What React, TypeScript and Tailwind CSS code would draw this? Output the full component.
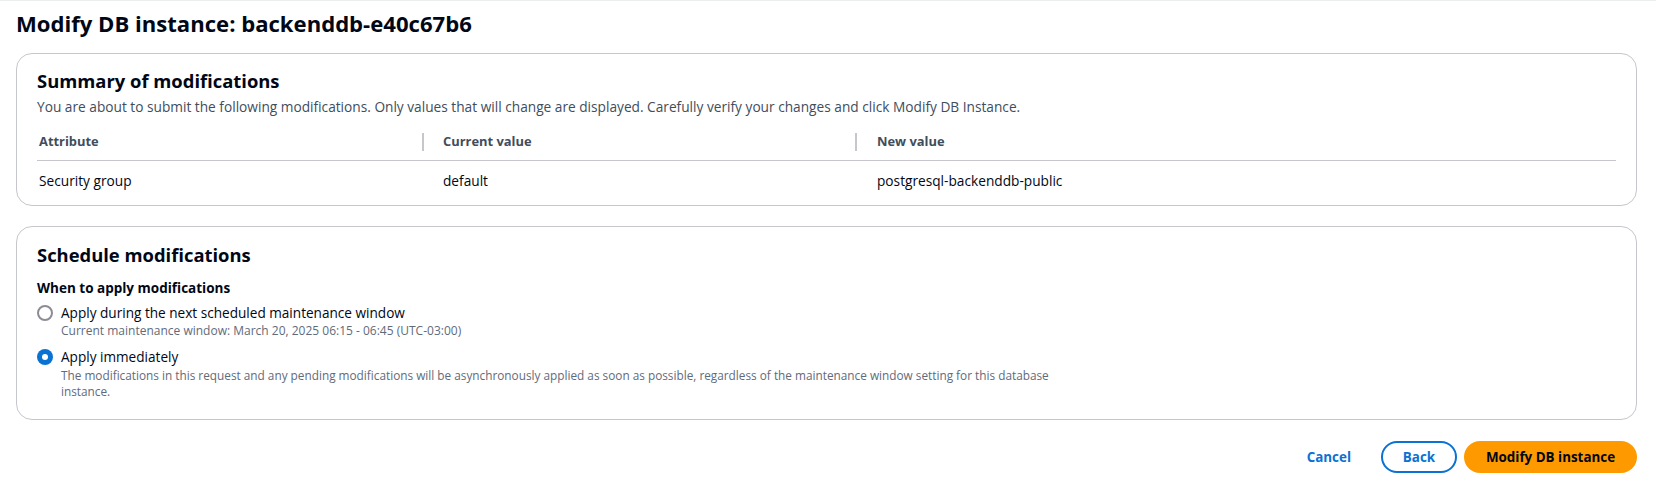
import React, { useState } from "react";

const font = { fontFamily: '"Open Sans", "Noto Sans", Arial, sans-serif' };

const rows = [
  {
    attribute: "Security group",
    current: "default",
    next: "postgresql-backenddb-public"
  }
];

const Radio = ({ checked }: { checked: boolean }) => {
  return checked ? (
    <span className="mt-[2px] w-[16px] h-[16px] rounded-full bg-[#0972d3] flex items-center justify-center shrink-0">
      <span className="w-[6px] h-[6px] rounded-full bg-white" />
    </span>
  ) : (
    <span className="mt-[2px] w-[16px] h-[16px] rounded-full border-2 border-[#8c8c94] bg-white shrink-0" />
  );
};

const App: React.FC = () => {
  const [when, setWhen] = useState("immediate");
  return (
    <div
      className="min-h-[485px] bg-white text-[#000716] pl-[16px] pr-[19px] pt-[7px] border-t border-[#eaeded]"
      style={font}
    >
      <h1 className="text-[22.1px] font-bold leading-[30px]">
        Modify DB instance: backenddb-e40c67b6
      </h1>
      <div className="mt-[15px] border border-[#c6c6cd] rounded-[16px] px-[20px] pt-[14px] pb-[4px]">
        <h2 className="text-[18.4px] font-bold leading-[26px]">Summary of modifications</h2>
        <p className="text-[13.7px] leading-[20px] text-[#414d5c] mt-[3px]">
          You are about to submit the following modifications. Only values that will change are displayed. Carefully verify your changes and click Modify DB Instance.
        </p>
        <div className="mt-[7px]">
          <div className="grid grid-cols-[385px_433px_1fr] border-b border-[#c6c6cd] text-[12.9px] font-bold text-[#414d5c]">
            <div className="px-[2px] h-[36px] flex items-center">Attribute</div>
            <div className="flex items-center h-[36px]">
              <span className="w-[2px] h-[18px] bg-[#c6c6cd]" />
              <span className="pl-[19px]">Current value</span>
            </div>
            <div className="flex items-center h-[36px]">
              <span className="w-[2px] h-[18px] bg-[#c6c6cd]" />
              <span className="pl-[20px]">New value</span>
            </div>
          </div>
          {rows.map((row, index) => (
            <div key={index} className="grid grid-cols-[385px_433px_1fr] text-[13.7px] text-[#000716] h-[40px] items-center">
              <div className="px-[2px]">{row.attribute}</div>
              <div className="pl-[21px]">{row.current}</div>
              <div className="pl-[22px]">{row.next}</div>
            </div>
          ))}
        </div>
      </div>
      <div className="mt-[20px] border border-[#c6c6cd] rounded-[16px] px-[20px] pt-[15px] pb-[20px]">
        <h2 className="text-[18.4px] font-bold leading-[26px]">Schedule modifications</h2>
        <div className="mt-[11px] text-[13.5px] font-bold leading-[18px]">When to apply modifications</div>
        <div className="mt-[6px] flex flex-col gap-[8px]">
          <label className="flex gap-[8px] cursor-pointer" onClick={() => setWhen("window")}>
            <Radio checked={when === "window"} />
            <div>
              <div className="text-[13.6px] leading-[20px]">Apply during the next scheduled maintenance window</div>
              <div className="text-[12px] leading-[16px] text-[#5f6b7a]">
                Current maintenance window: March 20, 2025 06:15 - 06:45 (UTC-03:00)
              </div>
            </div>
          </label>
          <label className="flex gap-[8px] cursor-pointer" onClick={() => setWhen("immediate")}>
            <Radio checked={when === "immediate"} />
            <div>
              <div className="text-[13.6px] leading-[20px]">Apply immediately</div>
              <div className="text-[11.8px] leading-[16px] text-[#5f6b7a] max-w-[1000px]">
                The modifications in this request and any pending modifications will be asynchronously applied as soon as possible, regardless of the maintenance window setting for this database instance.
              </div>
            </div>
          </label>
        </div>
      </div>
      <div className="mt-[21px] flex justify-end items-center">
        <button className="text-[13.4px] font-bold text-[#0972d3] mr-[30px]">Cancel</button>
        <button className="h-[32px] w-[76px] flex items-center justify-center rounded-full border-2 border-[#0972d3] text-[13.4px] font-bold text-[#0972d3] mr-[7px]">
          Back
        </button>
        <button className="h-[32px] w-[173px] flex items-center justify-center rounded-full bg-[#ff9900] text-[13.4px] font-bold text-[#000716]">
          Modify DB instance
        </button>
      </div>
    </div>
  );
};

export default App;
